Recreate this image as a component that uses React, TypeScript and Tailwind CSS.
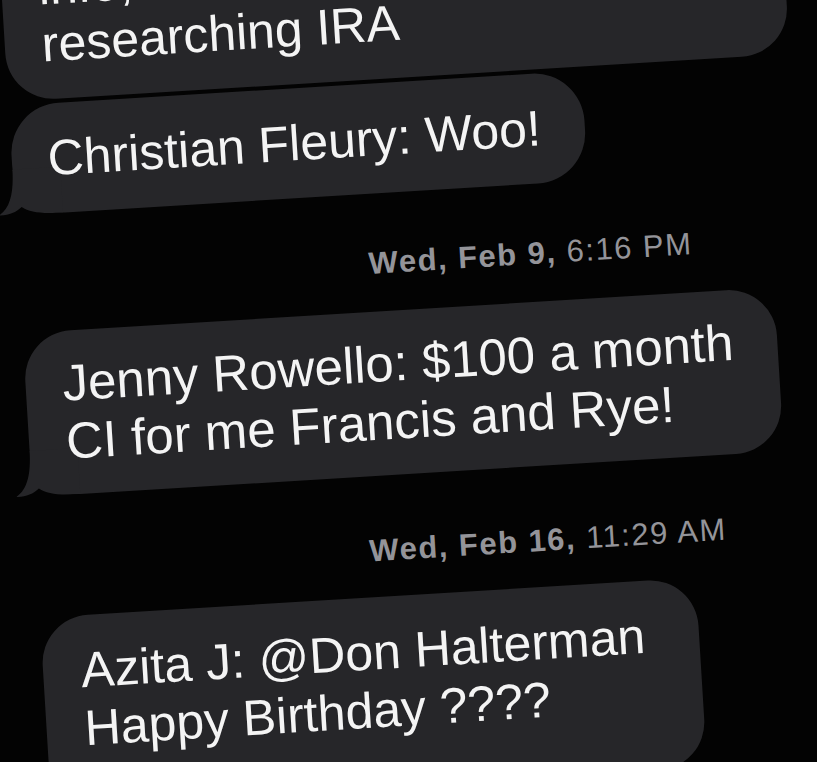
import React from "react";

function Tail() {
  return (
    <svg
      className="absolute left-[-16px] bottom-0"
      width="64"
      height="46"
      viewBox="0 0 64 46"
    >
      <path
        d="M16 0 C16 22 12 38 0 45 C9 46 17 43 23 38 C31 44 42 46 64 46 L64 0 Z"
        fill="#262629"
      />
    </svg>
  );
}

export default function App() {
  return (
    <div className="w-[817px] h-[762px] overflow-hidden bg-[#030303] font-['Liberation_Sans',Arial,sans-serif]">
      <div className="w-[1028px] origin-top-left rotate-[-3.5deg] flex flex-col items-start">
        <div className="relative ml-[2px] mt-[-64px] w-[783px] rounded-[48px] bg-[#262629] pl-[37px] pt-[26px] pb-[26px] text-[50px] leading-[57px] text-[#f4f4f4] whitespace-nowrap">
          <div>info, I'm also</div>
          <div>researching IRA</div>
        </div>

        <div className="relative ml-[2px] mt-[4px] w-[574px] rounded-[50px] bg-[#262629] pl-[36px] pt-[27px] pb-[26px] text-[50px] leading-[57px] text-[#f4f4f4] whitespace-nowrap">
          <Tail />
          <div className="relative">Christian Fleury: Woo!</div>
        </div>

        <div className="mt-[51px] w-full text-center text-[31px] leading-[37px] tracking-[1.5px] text-[#949499]">
          <span className="font-bold">Wed, Feb 9,</span> 6:16 PM
        </div>

        <div className="relative ml-[2px] mt-[30px] w-[753px] rounded-[48px] bg-[#262629] pl-[37px] pt-[24px] pb-[24px] text-[51px] leading-[58px] text-[#f4f4f4] whitespace-nowrap">
          <Tail />
          <div className="relative">Jenny Rowello: $100 a month</div>
          <div className="relative">CI for me Francis and Rye!</div>
        </div>

        <div className="mt-[56px] w-full text-center text-[31px] leading-[37px] tracking-[1.5px] text-[#949499]">
          <span className="font-bold">Wed, Feb 16,</span> 11:29 AM
        </div>

        <div className="relative ml-[2px] mt-[28px] w-[657px] rounded-[48px] bg-[#262629] pl-[38px] pt-[26px] pb-[48px] text-[50px] leading-[58px] text-[#f4f4f4] whitespace-nowrap">
          <div>Azita J: @Don Halterman</div>
          <div>Happy Birthday ????</div>
        </div>
      </div>
    </div>
  );
}
